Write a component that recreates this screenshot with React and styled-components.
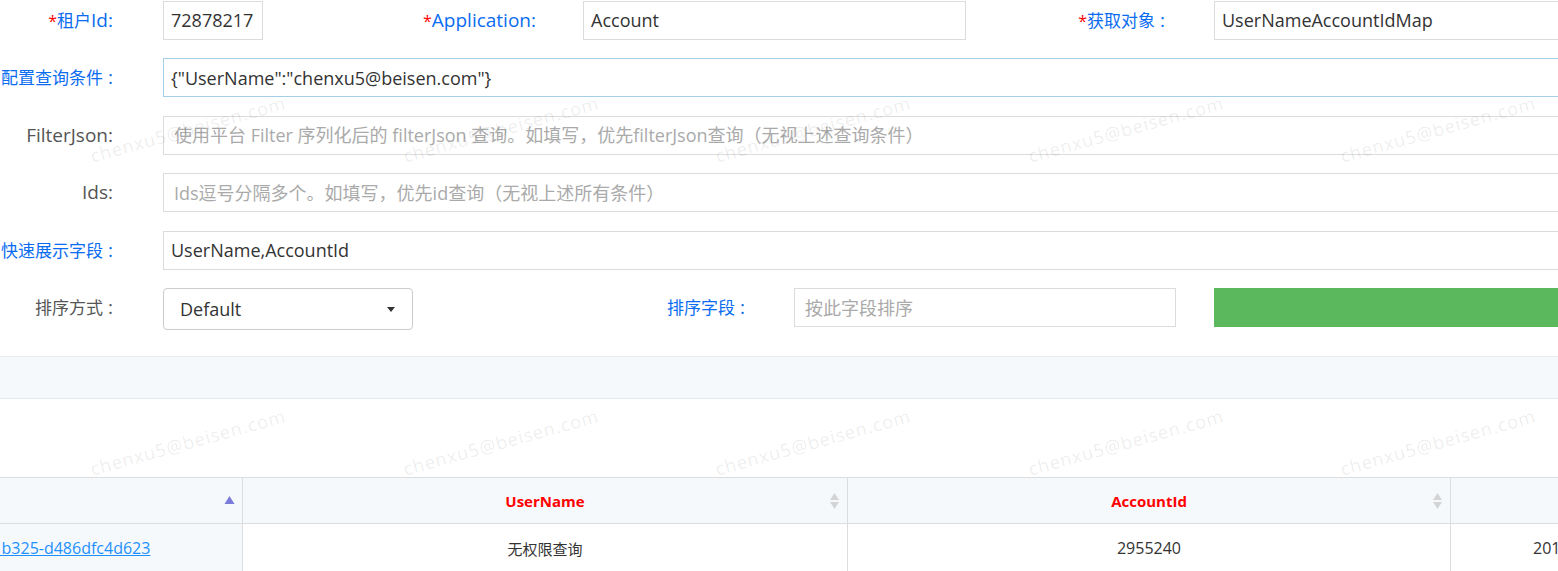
import React from "react";
import styled, { createGlobalStyle } from "styled-components";

const GlobalStyle = createGlobalStyle`
  html, body { margin: 0; padding: 0; background: #fff; }
  body {
    font-family: "Microsoft YaHei", "Open Sans", "Noto Sans CJK SC", sans-serif;
    overflow: hidden;
  }
  * { box-sizing: border-box; }
`;

const Page = styled.div`
  position: relative;
  width: 1558px;
  height: 571px;
  overflow: hidden;
  background: #fff;
`;

const Form = styled.div`
  width: 1600px;
  padding-top: 0.5px;
  display: flex;
  flex-direction: column;
  gap: 18.5px;
`;

const Row = styled.div`
  display: flex;
  align-items: flex-start;
`;

const Label = styled.label`
  flex-shrink: 0;
  width: ${(p) => p.$w}px;
  padding-right: ${(p) => p.$pr || 50}px;
  display: flex;
  justify-content: flex-end;
  align-items: baseline;
  white-space: nowrap;
  height: 39px;
  line-height: 39px;
  font-size: 17px;
  color: ${(p) => (p.$muted ? "#555" : "#0a6cf0")};
`;

const Lat = styled.span`
  font-size: 19px;
`;

const Star = styled.span`
  color: #f00;
  font-size: 16px;
`;

const Colon = styled.span`
  font-size: 19px;
  margin-left: ${(p) => (p.$cjk ? 5 : 0)}px;
`;

const Input = styled.input`
  flex: ${(p) => (p.$w ? "0 0 auto" : "1 1 auto")};
  width: ${(p) => (p.$w ? `${p.$w}px` : "auto")};
  height: 39px;
  margin: 0;
  padding: 0 7px 0 ${(p) => (p.placeholder ? 10 : 7)}px;
  border: 1px solid ${(p) => (p.$focus ? "#a3d0e8" : "#dcdcdc")};
  background: transparent;
  font-family: inherit;
  font-size: 18px;
  color: #333;
  outline: none;
  &::placeholder { color: #aaa; }
`;

const Select = styled.div`
  flex: 0 0 250px;
  height: 42px;
  border: 1px solid #ccc;
  border-radius: 4px;
  display: flex;
  align-items: center;
  justify-content: space-between;
  padding: 0 17px 0 16px;
  font-size: 18px;
  color: #333;
`;

const Caret = styled.span`
  width: 0;
  height: 0;
  border-left: 4.5px solid transparent;
  border-right: 4.5px solid transparent;
  border-top: 5px solid #333;
`;

const GoButton = styled.button`
  flex: 1 1 auto;
  height: 39px;
  margin-left: 38px;
  border: none;
  background: #5cb85c;
`;

const Band = styled.div`
  margin-top: 26px;
  height: 43px;
  background: #f5f9fc;
  border-top: 1px solid #e6eaee;
  border-bottom: 1px solid #e6eaee;
`;

const TableWrap = styled.div`
  margin-top: 78px;
  overflow: hidden;
`;

const Table = styled.table`
  margin-left: -246px;
  border-collapse: collapse;
  table-layout: fixed;
  width: 2012px;
`;

const Th = styled.th`
  position: relative;
  height: 46px;
  padding: 0;
  background: #f5f9fc;
  border: 1px solid #ddd;
  font-size: 15px;
  font-weight: 700;
  color: #f00;
  text-align: center;
`;

const Td = styled.td`
  height: 49px;
  padding: 0 8px;
  border: 1px solid #ddd;
  border-top: none;
  font-size: ${(p) => (p.$latin ? 16 : 15)}px;
  color: #333;
  text-align: center;
  background: ${(p) => (p.$sorted ? "#f5f9fc" : "#fff")};
`;

const Link = styled.a`
  color: #1e90ff;
  text-decoration: underline;
`;

const SortIcon = styled.svg`
  position: absolute;
  right: 7px;
  top: 50%;
  transform: translateY(-50%);
`;

const WatermarkLayer = styled.div`
  position: absolute;
  left: 31.75px;
  top: -27.5px;
  display: grid;
  grid-template-columns: repeat(5, 312.5px);
  grid-template-rows: repeat(2, 313px);
  pointer-events: none;
  z-index: 10;
`;

const Mark = styled.div`
  display: flex;
  align-items: center;
  justify-content: center;
  span {
    transform: rotate(-15.5deg);
    font-family: "Open Sans", sans-serif;
    font-size: 18px;
    letter-spacing: 1px;
    color: rgba(0, 0, 0, 0.085);
    white-space: nowrap;
  }
`;

function Sort({ active }) {
  return (
    <SortIcon width="11" height="18" viewBox="0 0 11 18">
      {active ? (
        <path d="M5.5 4 L10.5 12 L0.5 12 Z" fill="#7b7bd9" />
      ) : (
        <>
          <path d="M5.5 1 L10 8 L1 8 Z" fill="#d4d4d4" />
          <path d="M5.5 17 L10 10 L1 10 Z" fill="#d4d4d4" />
        </>
      )}
    </SortIcon>
  );
}

export default function App() {
  const marks = Array.from({ length: 10 });
  return (
    <Page>
      <GlobalStyle />
      <Form>
        <Row>
          <Label $w={163}><Star>*</Star>租户<Lat>Id</Lat><Colon>:</Colon></Label>
          <Input $w={100} defaultValue="72878217" />
          <Label $w={320} $pr={47}><Star>*</Star><Lat>Application</Lat><Colon>:</Colon></Label>
          <Input $w={383} defaultValue="Account" />
          <Label $w={248} $pr={49}><Star>*</Star>获取对象<Colon $cjk>:</Colon></Label>
          <Input defaultValue="UserNameAccountIdMap" />
        </Row>
        <Row>
          <Label $w={163}>配置查询条件<Colon $cjk>:</Colon></Label>
          <Input $focus defaultValue={'{"UserName":"chenxu5@beisen.com"}'} />
        </Row>
        <Row>
          <Label $w={163} $muted><Lat>FilterJson</Lat><Colon>:</Colon></Label>
          <Input placeholder="使用平台 Filter 序列化后的 filterJson 查询。如填写，优先filterJson查询（无视上述查询条件）" />
        </Row>
        <Row>
          <Label $w={163} $muted><Lat>Ids</Lat><Colon>:</Colon></Label>
          <Input placeholder="Ids逗号分隔多个。如填写，优先id查询（无视上述所有条件）" />
        </Row>
        <Row>
          <Label $w={163}>快速展示字段<Colon $cjk>:</Colon></Label>
          <Input defaultValue="UserName,AccountId" />
        </Row>
        <Row>
          <Label $w={163} $muted>排序方式<Colon $cjk>:</Colon></Label>
          <Select>Default<Caret /></Select>
          <Label $w={381} $pr={49}>排序字段<Colon $cjk>:</Colon></Label>
          <Input $w={382} placeholder="按此字段排序" />
          <GoButton type="button" aria-label="查询" />
        </Row>
      </Form>
      <Band />
      <TableWrap>
        <Table>
          <colgroup>
            <col style={{ width: 488 }} />
            <col style={{ width: 605 }} />
            <col style={{ width: 603 }} />
            <col style={{ width: 316 }} />
          </colgroup>
          <thead>
            <tr>
              <Th aria-label="Id"><Sort active /></Th>
              <Th>UserName<Sort /></Th>
              <Th>AccountId<Sort /></Th>
              <Th>CreatedTime<Sort /></Th>
            </tr>
          </thead>
          <tbody>
            <tr>
              <Td $sorted $latin><Link href="#">9f3c2a71-5e8d-4c1b b325-d486dfc4d623</Link></Td>
              <Td>无权限查询</Td>
              <Td $latin>2955240</Td>
              <Td $latin>2018-11-15 17:25:38</Td>
            </tr>
          </tbody>
        </Table>
      </TableWrap>
      <WatermarkLayer>
        {marks.map((_, i) => (
          <Mark key={i}><span>chenxu5@beisen.com</span></Mark>
        ))}
      </WatermarkLayer>
    </Page>
  );
}
